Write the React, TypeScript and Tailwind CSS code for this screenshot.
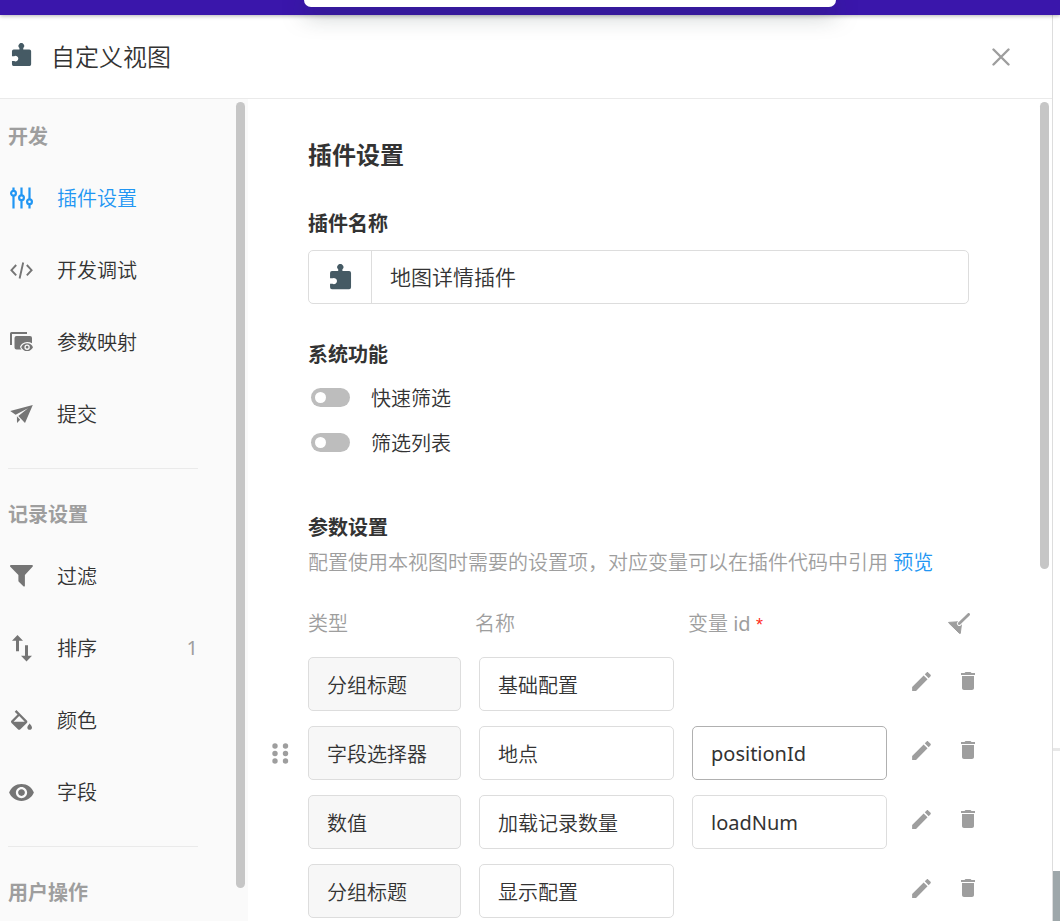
import React, { useState } from "react";

type IconProps = { className?: string };

function PuzzleIcon({ className }: IconProps) {
  return (
    <svg viewBox="0 0 24 27" fill="currentColor" className={className} aria-hidden="true">
      <path d="M9.6 7.4V5.6a3.2 3.2 0 1 1 4.4 0v1.8h7a2 2 0 0 1 2 2v14.9a2 2 0 0 1-2 2H3.100a2 2 0 0 1-2-2v-3.700h2.500a3.200 3.200 0 1 0 0-5.600H1.100V9.400a2 2 0 0 1 2-2z" />
    </svg>
  );
}

function CloseIcon() {
  return (
    <svg width="18" height="18" viewBox="0 0 18 18" fill="none" stroke="currentColor" strokeWidth="2.4" strokeLinecap="round" aria-hidden="true">
      <path d="M1.500 1.500l15 15M16.500 1.500l-15 15" />
    </svg>
  );
}

function SlidersIcon() {
  return (
    <svg width="23" height="22" viewBox="0 0 23 22" fill="none" stroke="currentColor" strokeWidth="2.200" aria-hidden="true">
      <path d="M3.500 .5v3.300M3.500 8.800v12.700M11.500 .5v7.700M11.500 13.200v8.300M19.500 .5v11.700M19.500 17.200v4.300" />
      <circle cx="3.500" cy="6.300" r="2.400" />
      <circle cx="11.500" cy="10.700" r="2.400" />
      <circle cx="19.500" cy="14.700" r="2.400" />
    </svg>
  );
}

function CodeIcon() {
  return (
    <svg width="23" height="17" viewBox="0 0 23 17" fill="none" stroke="currentColor" strokeWidth="1.900" aria-hidden="true">
      <path d="M6.200 3L1.400 8.200l4.800 5.200M16.800 3l4.800 5.200-4.800 5.200M13.200 .5L9.600 16.500" />
    </svg>
  );
}

function MappingIcon() {
  return (
    <svg width="23" height="20" viewBox="0 0 23 20" fill="currentColor" aria-hidden="true">
      <path d="M0 1.500A1.500 1.500 0 0 1 1.500 0H17v2H2v11H0z" />
      <path d="M6.500 4H20a2 2 0 0 1 2 2v5.200a9 9 0 0 0-5-1.300c-3.600 0-6 2.300-7 4.900.2 1 .7 2 1.500 2.800h-5a2 2 0 0 1-2-2V6a2 2 0 0 1 2-2z" />
      <path fillRule="evenodd" d="M11.200 15.200c1-2.400 3.200-3.900 5.900-3.900s4.900 1.500 5.900 3.900c-1 2.400-3.200 3.900-5.900 3.900s-4.900-1.500-5.900-3.900zm5.900 2.700a2.700 2.700 0 1 0 0-5.400 2.700 2.700 0 0 0 0 5.400zm0-1.300a1.400 1.400 0 1 1 0-2.800 1.400 1.400 0 0 1 0 2.800z" />
    </svg>
  );
}

function PlaneIcon() {
  return (
    <svg width="23" height="18" viewBox="0 0 23 18" fill="currentColor" aria-hidden="true">
      <path d="M22.800 0L.2 6l5.400 3.700L18 3.300 8.300 11 15 17.900z" />
      <path d="M6.900 11.200l.1 6.700 3.200-3.100z" />
    </svg>
  );
}

function FunnelIcon() {
  return (
    <svg width="23" height="22" viewBox="0 0 23 22" fill="currentColor" aria-hidden="true">
      <path d="M1 0h20.800c1 0 1.400 1 .7 1.800L14.900 10v10.700c0 .8-.9 1.200-1.500.6l-4.600-4.500c-.3-.3-.4-.6-.4-1V10L.3 1.800C-.4 1 0 0 1 0z" />
    </svg>
  );
}

function SortIcon() {
  return (
    <svg width="20" height="27" viewBox="0 0 20 27" fill="currentColor" aria-hidden="true">
      <path d="M5.500 0L11 5.800H7v10.400H4V5.800H0zM14.500 26.500L9 20.700h4V10.300h3v10.400h4z" />
    </svg>
  );
}

function FillIcon() {
  return (
    <svg width="21" height="20" viewBox="3 0 18 17.100" fill="currentColor" aria-hidden="true">
      <path d="M16.560 8.940L7.620 0 6.210 1.410l2.380 2.380-5.150 5.150c-.59.59-.59 1.540 0 2.120l5.500 5.500c.29.29.68.44 1.060.44s.77-.15 1.060-.44l5.500-5.500c.59-.58.59-1.530 0-2.120zM5.210 10L10 5.210 14.790 10H5.210zM19 11.500s-2 2.170-2 3.500c0 1.100.9 2 2 2s2-.9 2-2c0-1.330-2-3.500-2-3.500z" />
    </svg>
  );
}

function EyeIcon() {
  return (
    <svg width="27" height="27" viewBox="0 0 24 24" fill="currentColor" aria-hidden="true">
      <path d="M12 4.500C7 4.500 2.730 7.610 1 12c1.730 4.390 6 7.500 11 7.500s9.270-3.110 11-7.500c-1.730-4.390-6-7.500-11-7.500zM12 17c-2.760 0-5-2.240-5-5s2.240-5 5-5 5 2.240 5 5-2.240 5-5 5zm0-8c-1.660 0-3 1.340-3 3s1.340 3 3 3 3-1.340 3-3-1.340-3-3-3z" />
    </svg>
  );
}

function BroomIcon() {
  return (
    <svg width="22" height="21" viewBox="0 0 22 21" aria-hidden="true">
      <path d="M.6 9.400L13.800 8.500 12.300 20.400h-.8L.6 9.800z" fill="currentColor" stroke="currentColor" strokeLinejoin="round" />
      <path d="M11.300 10.500L16 5.800" stroke="#fff" strokeWidth="4.800" strokeLinecap="round" fill="none" />
      <path d="M11.300 10.500L20.600 1.400" stroke="currentColor" strokeWidth="2.800" strokeLinecap="round" fill="none" />
    </svg>
  );
}

function PencilIcon() {
  return (
    <svg width="25" height="25" viewBox="0 0 24 24" fill="currentColor" aria-hidden="true">
      <path d="M3 17.250V21h3.750L17.810 9.940l-3.750-3.750L3 17.250zM20.710 7.040c.39-.39.39-1.020 0-1.410l-2.340-2.340c-.39-.39-1.020-.39-1.410 0l-1.830 1.830 3.750 3.750 1.830-1.830z" />
    </svg>
  );
}

function TrashIcon() {
  return (
    <svg width="24" height="24" viewBox="0 0 24 24" fill="currentColor" aria-hidden="true">
      <path d="M6 19c0 1.100.9 2 2 2h8c1.100 0 2-.9 2-2V7H6v12zM19 4h-3.500l-1-1h-5l-1 1H5v2h14V4z" />
    </svg>
  );
}

function DragIcon() {
  return (
    <svg width="17" height="21" viewBox="0 0 17 21" fill="currentColor" aria-hidden="true">
      {[3, 10.5, 18].map((y) => (
        <React.Fragment key={y}>
          <circle cx="3" cy={y} r="2.700" />
          <circle cx="13.500" cy={y} r="2.700" />
        </React.Fragment>
      ))}
    </svg>
  );
}

type NavItem = { label: string; icon: React.ReactNode; active?: boolean; count?: number };
type NavGroup = { title: string; items: NavItem[] };

const groups: NavGroup[] = [
  {
    title: "开发",
    items: [
      { label: "插件设置", icon: <SlidersIcon />, active: true },
      { label: "开发调试", icon: <CodeIcon /> },
      { label: "参数映射", icon: <MappingIcon /> },
      { label: "提交", icon: <PlaneIcon /> },
    ],
  },
  {
    title: "记录设置",
    items: [
      { label: "过滤", icon: <FunnelIcon /> },
      { label: "排序", icon: <SortIcon />, count: 1 },
      { label: "颜色", icon: <FillIcon /> },
      { label: "字段", icon: <EyeIcon /> },
    ],
  },
  { title: "用户操作", items: [] },
];

function Sidebar() {
  return (
    <aside className="flex w-[248px] shrink-0 justify-between overflow-hidden bg-[#fafafa] pr-[3px]">
      <nav className="w-[198px] pt-[13px] pl-2">
        {groups.map((group, index) => (
          <section key={group.title} className={index > 0 ? "mt-[18px] border-t border-[#eaeaea] pt-[21px]" : ""}>
            <h2 className="flex h-[50px] items-center text-[20px] font-bold text-[#9e9e9e]">{group.title}</h2>
            <ul>
              {group.items.map((item) => (
                <li key={item.label}>
                  <a href="#" className={`flex h-[72px] items-center ${item.active ? "text-[#2196f3]" : "text-[#333]"}`}>
                    <span className={`mr-[22px] flex w-[27px] justify-center ${item.active ? "" : "text-[#757575]"}`}>
                      {item.icon}
                    </span>
                    <span className="flex-1 pt-0.5">{item.label}</span>
                    {item.count !== undefined && <span className="font-normal text-[#9e9e9e]">{item.count}</span>}
                  </a>
                </li>
              ))}
            </ul>
          </section>
        ))}
      </nav>
      <div className="w-[9px] pt-[3px]">
        <div className="h-[96%] rounded-full bg-[#c6c6c6]" />
      </div>
    </aside>
  );
}

function Switch({ label }: { label: string }) {
  return (
    <label className="flex h-[45px] items-center gap-[21px] pl-[3px]">
      <input
        type="checkbox"
        role="switch"
        className="relative h-[19px] w-[39px] appearance-none rounded-full bg-[#bdbdbd] before:absolute before:top-1 before:left-1 before:size-[11px] before:rounded-full before:bg-white checked:bg-[#2196f3] checked:before:left-6"
      />
      <span className="pt-0.5">{label}</span>
    </label>
  );
}

type Param = { type: string; name: string; id?: string; hovered?: boolean };

const initialParams: Param[] = [
  { type: "分组标题", name: "基础配置" },
  { type: "字段选择器", name: "地点", id: "positionId", hovered: true },
  { type: "数值", name: "加载记录数量", id: "loadNum" },
  { type: "分组标题", name: "显示配置" },
];

const box = "block h-[54px] w-full rounded-[5px] border px-[18px] text-[20px] outline-none";

function ParamTable() {
  return (
    <table className="w-full table-fixed">
      <colgroup>
        <col className="w-[36px]" />
        <col className="w-[167px]" />
        <col />
        <col />
        <col className="w-[82px]" />
      </colgroup>
      <thead>
        <tr className="h-[68px] text-left text-[#9e9e9e]">
          <td />
          <th className="pt-0.5 font-[350]">类型</th>
          <th className="pt-0.5 font-[350]">名称</th>
          <th className="pt-0.5 font-[350]">
            变量 <span className="font-normal">id</span>{" "}
            <span className="font-['Liberation_Sans',sans-serif] text-[18px] text-[#ff2b20]">*</span>
          </th>
          <th>
            <button type="button" aria-label="清理" className="ml-[47px] block">
              <BroomIcon />
            </button>
          </th>
        </tr>
      </thead>
      <tbody>
        {initialParams.map((param, index) => (
          <tr key={index} className="h-[69px] align-top">
            <td className="text-[#9e9e9e]">
              {param.hovered && (
                <button type="button" aria-label="拖动" className="flex h-[54px] items-center">
                  <DragIcon />
                </button>
              )}
            </td>
            <td className="pr-3.5">
              <input aria-label="类型" readOnly value={param.type} className={`${box} border-[#ddd] bg-[#f7f7f7]`} />
            </td>
            <td className="pr-3.5 pl-1">
              <input aria-label="名称" defaultValue={param.name} className={`${box} border-[#ddd]`} />
            </td>
            <td className="pr-3.5 pl-1">
              {param.id && (
                <input
                  aria-label="变量 id"
                  defaultValue={param.id}
                  className={`${box} font-normal ${param.hovered ? "border-[#b0b0b0]" : "border-[#ddd]"}`}
                />
              )}
            </td>
            <td>
              <div className="flex h-12 items-center gap-[22px] pl-2 text-[#9e9e9e]">
                <button type="button" aria-label="编辑">
                  <PencilIcon />
                </button>
                <button type="button" aria-label="删除">
                  <TrashIcon />
                </button>
              </div>
            </td>
          </tr>
        ))}
      </tbody>
    </table>
  );
}

function Settings() {
  const [name, setName] = useState("地图详情插件");
  return (
    <main className="flex min-w-0 flex-1 overflow-hidden">
      <div className="min-w-0 flex-1">
        <div className="pr-[71px] pl-[60px]">
          <h1 className="pt-[38px] text-[24px] leading-9 font-bold">插件设置</h1>
          <label htmlFor="plugin-name" className="mt-9 block leading-[30px] font-bold">
            插件名称
          </label>
          <div className="mt-[11px] flex h-[54px] rounded-[5px] border border-[#ddd]">
            <button type="button" aria-label="图标" className="flex w-[63px] items-center justify-center border-r border-[#ddd] text-[#455a64]">
              <PuzzleIcon className="w-[23px]" />
            </button>
            <input
              id="plugin-name"
              value={name}
              onChange={(event) => setName(event.target.value)}
              className="min-w-0 flex-1 px-[18px] text-[21px] outline-none"
            />
          </div>
          <h2 className="mt-9 leading-[30px] font-bold">系统功能</h2>
          <div className="mt-[5px]">
            <Switch label="快速筛选" />
            <Switch label="筛选列表" />
          </div>
          <h2 className="mt-12 leading-[30px] font-bold">参数设置</h2>
          <p className="mt-[5px] leading-[30px] text-[#9e9e9e]">
            配置使用本视图时需要的设置项，对应变量可以在插件代码中引用{" "}
            <a href="#" className="text-[#2196f3]">
              预览
            </a>
          </p>
        </div>
        <div className="mt-[11px] pr-[57px] pl-6">
          <ParamTable />
        </div>
      </div>
      <div className="mr-[3px] w-[9px] pt-[3px]">
        <div className="h-[57%] rounded-full bg-[#c6c6c6]" />
      </div>
    </main>
  );
}

export default function App() {
  return (
    <div className="relative flex h-screen flex-col overflow-hidden bg-white font-['Noto_Sans','Noto_Sans_CJK_SC',sans-serif] text-[20px] leading-[30px] font-[350] text-[#333]">
      <div className="z-10 h-[15px] shrink-0 bg-[#3a16ab] shadow-[0_1px_4px_rgba(0,0,0,0.3)]" />
      <div className="absolute top-0 left-[304px] z-20 h-[7px] w-[532px] rounded-b-[12px] bg-white shadow-[0_6px_22px_rgba(30,50,50,0.5)]" />
      <div className="flex min-h-0 flex-1">
        <div className="flex min-w-0 flex-1 flex-col border-r border-[#ddd]">
          <header className="flex h-[84px] shrink-0 items-center border-b border-[#eaeaea] pr-[42px] pl-[11px]">
            <PuzzleIcon className="mb-1 w-[21px] text-[#455a64]" />
            <h1 className="ml-[19px] flex-1 text-[24px] leading-9">自定义视图</h1>
            <button type="button" aria-label="关闭" className="text-[#9e9e9e]">
              <CloseIcon />
            </button>
          </header>
          <div className="flex min-h-0 flex-1">
            <Sidebar />
            <Settings />
          </div>
        </div>
        <div className="flex w-[7px] flex-col justify-end">
          <div className="h-[3px] bg-[#e8e8e8]" />
          <div className="mt-[120px] h-[50px] bg-[#9ea7aa]" />
        </div>
      </div>
    </div>
  );
}
